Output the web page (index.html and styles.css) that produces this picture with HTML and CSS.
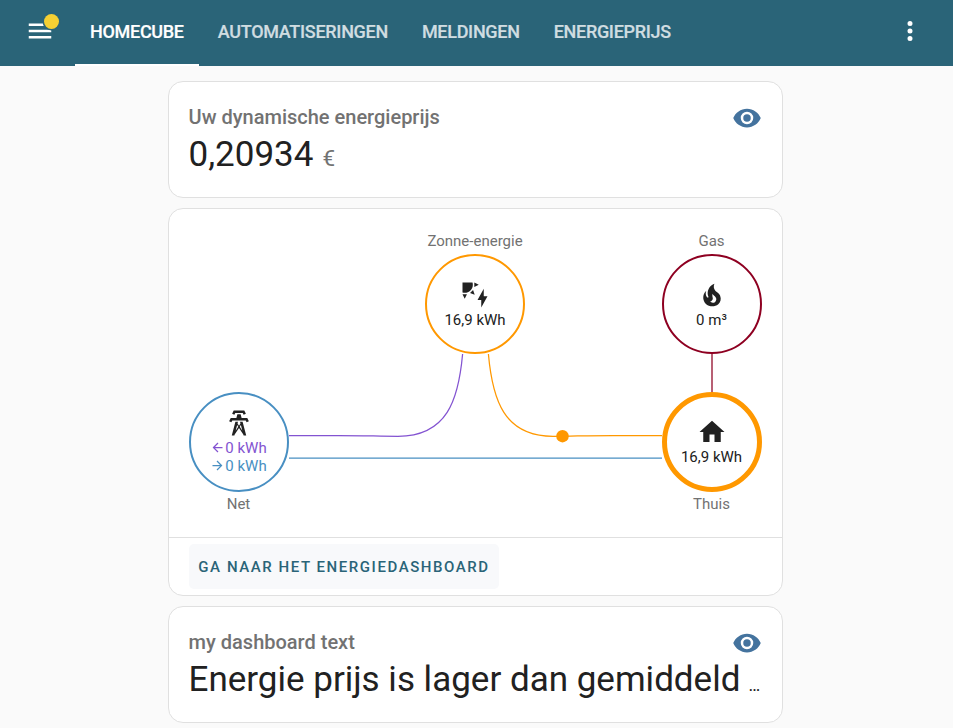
FILE: index.html
```html
<!DOCTYPE html>
<html lang="nl">
<head>
<meta charset="utf-8">
<title>Homecube</title>
<link rel="stylesheet" href="styles.css">
</head>
<body>
<header class="toolbar">
  <button class="menu" aria-label="Menu">
    <svg viewBox="0 0 24 24"><path d="M3,6H21V8H3V6M3,11H21V13H3V11M3,16H21V18H3V16Z"/></svg>
    <span class="badge"></span>
  </button>
  <nav class="tabs">
    <a class="tab active">HOMECUBE</a>
    <a class="tab">AUTOMATISERINGEN</a>
    <a class="tab">MELDINGEN</a>
    <a class="tab">ENERGIEPRIJS</a>
  </nav>
  <button class="more" aria-label="Meer">
    <svg viewBox="0 0 24 24"><path d="M12,16A2,2 0 0,1 14,18A2,2 0 0,1 12,20A2,2 0 0,1 10,18A2,2 0 0,1 12,16M12,10A2,2 0 0,1 14,12A2,2 0 0,1 12,14A2,2 0 0,1 10,12A2,2 0 0,1 12,10M12,4A2,2 0 0,1 14,6A2,2 0 0,1 12,8A2,2 0 0,1 10,6A2,2 0 0,1 12,4Z"/></svg>
  </button>
</header>
<main class="column">
  <section class="card entity">
    <div class="head">
      <span class="name">Uw dynamische energieprijs</span>
      <svg class="eye" viewBox="0 0 24 24"><path d="M12,9A3,3 0 0,0 9,12A3,3 0 0,0 12,15A3,3 0 0,0 15,12A3,3 0 0,0 12,9M12,17A5,5 0 0,1 7,12A5,5 0 0,1 12,7A5,5 0 0,1 17,12A5,5 0 0,1 12,17M12,4.5C7,4.5 2.73,7.61 1,12C2.73,16.39 7,19.5 12,19.5C17,19.5 21.27,16.39 23,12C21.27,7.61 17,4.5 12,4.5Z"/></svg>
    </div>
    <div class="info"><span class="value">0,20934</span> <span class="unit">€</span></div>
  </section>

  <section class="card energy">
    <div class="flow">
      <div class="row top">
        <div class="node solar">
          <span class="label">Zonne-energie</span>
          <div class="circle">
            <svg class="icon" viewBox="0 0 24 24"><path d="M11.45,2V5.55L15,3.77L11.45,2M10.45,8L8,10.46L11.75,11.71L10.45,8M2,11.45L3.77,15L5.55,11.45H2M10,2H2V10C2.57,10.17 3.17,10.25 3.77,10.25C7.35,10.26 10.26,7.35 10.27,3.75C10.26,3.16 10.17,2.57 10,2M17,22V16H14L19,7V13H22L17,22Z"/></svg>
            <span>16,9 kWh</span>
          </div>
        </div>
        <div class="node gas">
          <span class="label">Gas</span>
          <div class="circle">
            <svg class="icon" viewBox="0 0 24 24"><path d="M17.66 11.2C17.43 10.9 17.15 10.64 16.89 10.38C16.22 9.78 15.46 9.35 14.82 8.72C13.33 7.26 13 4.85 13.95 3C13 3.23 12.17 3.75 11.46 4.32C8.87 6.4 7.85 10.07 9.07 13.22C9.11 13.32 9.15 13.42 9.15 13.55C9.15 13.77 9 13.97 8.8 14.05C8.57 14.15 8.33 14.09 8.14 13.93C8.08 13.88 8.04 13.83 8 13.76C6.87 12.33 6.69 10.28 7.45 8.64C5.78 10 4.87 12.3 5 14.47C5.06 14.97 5.12 15.47 5.29 15.97C5.43 16.57 5.7 17.17 6 17.7C7.08 19.43 8.95 20.67 10.96 20.92C13.1 21.19 15.39 20.8 17.03 19.32C18.86 17.66 19.5 15 18.56 12.72L18.43 12.46C18.22 12 17.66 11.2 17.66 11.2M14.5 17.5C14.22 17.74 13.76 18 13.4 18.1C12.28 18.5 11.16 17.94 10.5 17.28C11.69 17 12.4 16.12 12.61 15.23C12.78 14.43 12.46 13.77 12.33 13C12.21 12.26 12.23 11.63 12.5 10.94C12.69 11.32 12.89 11.7 13.13 12C13.9 13 15.11 13.44 15.37 14.8C15.41 14.94 15.43 15.08 15.43 15.23C15.46 16.05 15.1 16.95 14.5 17.5H14.5Z"/></svg>
            <span>0 m³</span>
          </div>
        </div>
      </div>
      <div class="row bottom">
        <div class="node grid">
          <div class="circle">
            <svg class="icon" viewBox="0 0 24 24"><path d="M8.28,5.45L6.5,4.55L7.76,2H16.23L17.5,4.55L15.72,5.44L15,4H9L8.28,5.45M18.62,8H14.09L13.3,5H10.7L9.91,8H5.38L4.1,10.55L5.89,11.44L6.62,10H17.38L18.1,11.45L19.89,10.56L18.62,8M17.77,22H15.7L15.46,21.1L12,15.9L8.53,21.1L8.3,22H6.23L9.12,11H11.19L10.83,12.35L12,14.1L13.16,12.35L12.81,11H14.88L17.77,22M11.4,15L10.5,13.65L9.32,18.13L11.4,15M14.68,18.12L13.5,13.64L12.6,15L14.68,18.12Z"/></svg>
            <span class="return"><svg class="arrow" viewBox="0 0 24 24"><path d="M20,11V13H8L13.5,18.5L12.08,19.92L4.16,12L12.08,4.08L13.5,5.5L8,11H20Z"/></svg>0 kWh</span>
            <span class="consume"><svg class="arrow" viewBox="0 0 24 24"><path d="M4,11V13H16L10.5,18.5L11.92,19.92L19.84,12L11.92,4.08L10.5,5.5L16,11H4Z"/></svg>0 kWh</span>
          </div>
          <span class="label">Net</span>
        </div>
        <div class="node home">
          <div class="circle">
            <svg class="icon" viewBox="0 0 24 24"><path d="M10,20V14H14V20H19V12H22L12,3L2,12H5V20H10Z"/></svg>
            <span>16,9 kWh</span>
          </div>
          <span class="label">Thuis</span>
        </div>
      </div>
      <svg class="lines" viewBox="289 354 425 110">
        <path class="l-return" d="M462.6,354 C458.5,400 447,436.3 398,436.3 C378,436.3 366,435.5 338,435.5 H289"/>
        <path class="l-solar" d="M488.4,354 C492.5,400 504,436.3 553,436.3 C573,436.3 585,435.5 613,435.5 H662"/>
        <path class="l-grid" d="M289,458 H662"/>
        <path class="l-gas" d="M712,354 V392"/>
        <circle class="dot" cx="562.5" cy="436.2" r="6.25"/>
      </svg>
    </div>
    <footer class="actions"><a class="button">GA NAAR HET ENERGIEDASHBOARD</a></footer>
  </section>

  <section class="card entity">
    <div class="head">
      <span class="name">my dashboard text</span>
      <svg class="eye" viewBox="0 0 24 24"><path d="M12,9A3,3 0 0,0 9,12A3,3 0 0,0 12,15A3,3 0 0,0 15,12A3,3 0 0,0 12,9M12,17A5,5 0 0,1 7,12A5,5 0 0,1 12,7A5,5 0 0,1 17,12A5,5 0 0,1 12,17M12,4.5C7,4.5 2.73,7.61 1,12C2.73,16.39 7,19.5 12,19.5C17,19.5 21.27,16.39 23,12C21.27,7.61 17,4.5 12,4.5Z"/></svg>
    </div>
    <div class="info"><span class="value">Energie prijs is lager dan gemiddeld</span> <span class="ellipsis">…</span></div>
  </section>
</main>
</body>
</html>
```
FILE: styles.css
```css
* { box-sizing: border-box; }

body {
  margin: 0;
  height: 728px;
  overflow: hidden;
  background: #fafafa;
  color: #212121;
  font-family: Roboto, "Liberation Sans", sans-serif;
}

svg { display: block; fill: currentColor; }

button {
  padding: 0;
  border: 0;
  background: none;
  color: inherit;
}

.toolbar {
  display: flex;
  align-items: center;
  height: 66px;
  padding: 0 28px 0 25px;
  background: #2a6478;
  color: #fff;
}

.menu { position: relative; width: 50px; height: 66px; padding-bottom: 4px; }
.menu svg { width: 30px; height: 30px; }
.badge {
  position: absolute;
  left: 19px;
  top: 14px;
  width: 15px;
  height: 15px;
  border-radius: 50%;
  background: #f5d033;
  box-shadow: 0 0 0 1.5px #2a6478;
}

.tabs { display: flex; flex: 1; height: 66px; }
.tab {
  padding: 0 15px;
  margin-right: 4px;
  line-height: 63px;
  font-size: 18px;
  font-weight: 500;
  letter-spacing: -0.3px;
  color: #d0dde1;
  -webkit-text-stroke: 0.2px currentColor;
}
.tab.active { color: #fff; border-bottom: 2px solid #fff; }

.more { padding-bottom: 4px; }
.more svg { width: 30px; height: 30px; }

.column {
  display: flex;
  flex-direction: column;
  gap: 10px;
  width: 615px;
  margin: 15px 0 0 168px;
}

.card {
  background: #fff;
  border: 1px solid #e0e0e0;
  border-radius: 15px;
}

.entity { height: 117px; padding: 20px 20px 0; }
.head { display: flex; justify-content: space-between; height: 32px; }
.name { font-size: 20px; line-height: 31px; font-weight: 500; color: #727272; margin-left: -0.4px; }
.eye { width: 30px; height: 30px; margin-top: 1px; color: #44739e; }
.info { line-height: 41px; white-space: nowrap; margin-left: -0.5px; }
.value { font-size: 35px; }
.unit { margin-left: 5px; font-size: 22.5px; color: #727272; }
.ellipsis { margin-left: 4px; font-size: 17.5px; }

.energy { height: 388px; }
.flow {
  position: relative;
  height: 328px;
  padding: 22px 20px 0;
  font-size: 15px;
}
.row { display: flex; }
.top { justify-content: flex-end; gap: 137px; }
.bottom { justify-content: space-between; margin-top: 38px; }
.node {
  display: flex;
  flex-direction: column;
  align-items: center;
  width: 100px;
}
.label { line-height: 20px; color: #727272; white-space: nowrap; margin-right: 1px; }
.top .label { margin-bottom: 3px; }
.bottom .label { margin-top: 2px; }

.circle {
  display: flex;
  flex-direction: column;
  align-items: center;
  justify-content: center;
  width: 100px;
  height: 100px;
  border: 2px solid;
  border-radius: 50%;
  line-height: 18px;
}
.circle > span { display: flex; align-items: center; margin-right: 1px; color: #212121; }
.icon { width: 30px; height: 30px; margin-bottom: 1px; color: #212121; }
.top .circle { padding-top: 1px; }
.solar .circle { border-color: #ff9800; }
.solar .label, .solar .circle > span { margin-right: 0; }
.gas .circle { border-color: #8e0021; }
.grid .circle { border-color: #488fc2; padding-bottom: 2px; }
.home .circle { border: 5px solid #ff9800; padding-bottom: 1px; }
.arrow { width: 15px; height: 15px; }
.circle > .return { color: #8353d1; }
.circle > .consume { color: #488fc2; }

.lines {
  position: absolute;
  left: 120px;
  top: 145px;
  width: 425px;
  height: 110px;
  fill: none;
  stroke-width: 1.25;
}
.l-return { stroke: #8353d1; }
.l-solar { stroke: #ff9800; }
.l-grid { stroke: #488fc2; }
.l-gas { stroke: #8e0021; }
.dot { fill: #ff9800; }

.actions { height: 58px; padding: 6px 20px; border-top: 1px solid #e0e0e0; }
.button {
  display: block;
  width: 310px;
  height: 45px;
  padding-top: 1px;
  border-radius: 5px;
  background: #f8f9fb;
  color: #2a6478;
  font-size: 15px;
  font-weight: 500;
  line-height: 45px;
  letter-spacing: 1.56px;
  text-align: center;
  white-space: nowrap;
}
```
